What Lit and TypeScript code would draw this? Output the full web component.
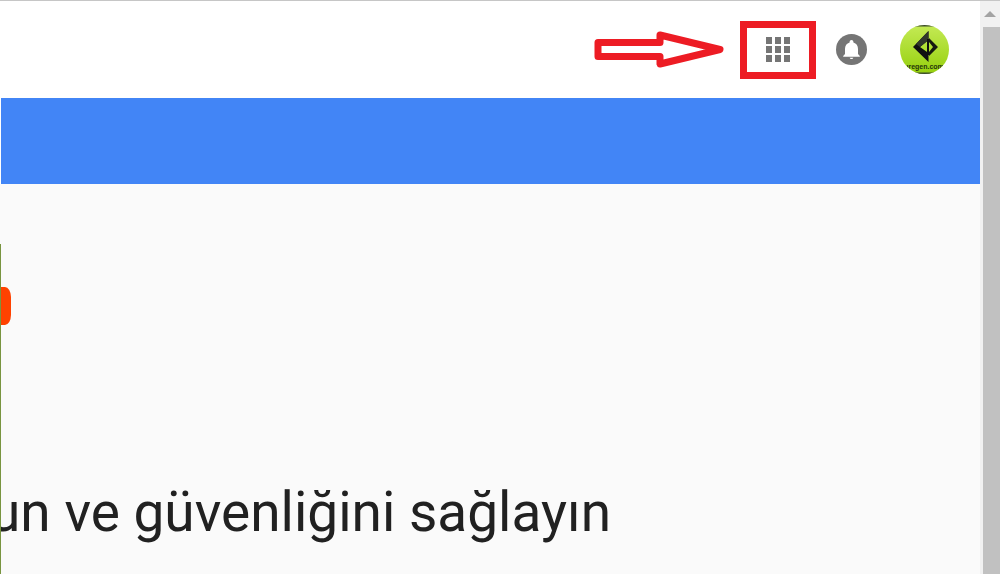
import { LitElement, html, svg, css } from "lit";
import { customElement } from "lit/decorators.js";

@customElement("app-root")
export class AppRoot extends LitElement {
  static styles = css`
    :host {
      display: grid;
      grid-template-columns: minmax(0, 1fr) 20px;
      height: 100vh;
      overflow: hidden;
      box-sizing: border-box;
      border-top: 1px solid #c6c6c6;
      background: #fff;
      font-family: Roboto, "Noto Sans", sans-serif;
      color: #212121;
    }
    .page {
      display: flex;
      flex-direction: column;
      min-width: 0;
      overflow: hidden;
    }
    header {
      display: flex;
      flex: none;
      align-items: center;
      justify-content: flex-end;
      height: 97px;
      padding-right: 30px;
      box-sizing: border-box;
    }
    svg {
      display: block;
    }
    button {
      display: block;
      padding: 0;
      border: 0;
      background: none;
      cursor: pointer;
    }
    .arrow {
      margin-right: 14px;
    }
    .apps {
      display: grid;
      place-items: center;
      width: 76px;
      height: 58px;
      margin-right: 20px;
      border: 7px solid #ed1c24;
    }
    .bell {
      margin-right: 32px;
    }
    .band {
      flex: none;
      height: 86px;
      margin-left: 1px;
      background: #4285f6;
    }
    main {
      position: relative;
      flex: 1;
      min-height: 0;
      overflow: hidden;
      background: #fafafa;
    }
    .edge {
      position: absolute;
      left: 0;
      top: 60px;
      bottom: 0;
      width: 1px;
      background: #789440;
    }
    .mark {
      position: absolute;
      left: 1px;
      top: 103px;
      width: 10px;
      height: 38px;
      border-radius: 0 6px 6px 0 / 0 10px 10px 0;
      background: #ff4200;
    }
    .copy {
      padding-top: 296px;
    }
    h1 {
      display: flex;
      justify-content: flex-end;
      width: 611px;
      margin: 0;
      font-size: 55px;
      line-height: 64px;
      font-weight: 400;
      white-space: nowrap;
    }
    .scroll {
      display: flex;
      flex-direction: column;
      background: #f1f1f1;
    }
    .up {
      display: grid;
      place-items: center;
      height: 26px;
    }
    .thumb {
      flex: 1;
      margin-left: 3px;
      background: #c1c1c1;
    }
  `;

  render() {
    return html`
      <div class="page">
        <header>
          <svg class="arrow" width="132" height="38" viewBox="0 0 132 38" aria-hidden="true">
            <path d="M4 11.500H66V4L126 18.500L66 33V25.500H4Z" fill="none" stroke="#ed1c24" stroke-width="7" stroke-linejoin="round" />
          </svg>
          <button class="apps" aria-label="Google uygulamaları">
            <svg width="24" height="26" viewBox="0 0 24 26" fill="#757575">
              ${[0, 9, 18].map((y) => [0, 9, 18].map((x) => svg`<rect x=${x} y=${y} width="6" height="7" />`))}
            </svg>
          </button>
          <button class="bell" aria-label="Bildirimler">
            <svg width="32" height="32" viewBox="0 0 32 32">
              <circle cx="15.500" cy="15.500" r="15.500" fill="#757575" />
              <path d="M15.500 6c-1.100 0-1.900.8-1.900 1.900v.7c-3 .8-4.600 3.400-4.600 6.300v5l-1.800 2v.9h16.600v-.9l-1.800-2v-5c0-2.900-1.600-5.500-4.600-6.300v-.7c0-1.100-.8-1.900-1.900-1.900zM13.700 23.700c.2.900.9 1.400 1.800 1.400s1.600-.5 1.800-1.400z" fill="#fff" />
            </svg>
          </button>
          <button class="avatar" aria-label="Hesap">
            <svg width="50" height="50" viewBox="0 0 50 50">
              <defs>
                <linearGradient id="lime" x1="0" y1="0" x2="0" y2="1">
                  <stop offset="0" stop-color="#c4ea55" />
                  <stop offset="1" stop-color="#94cf0b" />
                </linearGradient>
                <clipPath id="disc"><circle cx="24.500" cy="24.500" r="24.500" /></clipPath>
              </defs>
              <g clip-path="url(#disc)">
                <rect width="50" height="50" fill="url(#lime)" />
                <path d="M15 0H35V1.500H15ZM15 47.500H35V50H15Z" fill="#3c4a30" />
                <path d="M28.500 6V15L20 22L28.500 28V37L13 22Z" fill="#111" />
                <path d="M28.500 6V15L20 22L16 19Z" fill="#30362c" />
                <path d="M27 14H29V30H27Z" fill="#111" />
                <path d="M29 13L38 22L29 31V27L33 22L29 17Z" fill="#151a10" />
                <text x="24" y="44" text-anchor="middle" font-family="Liberation Sans, sans-serif" font-size="7" font-weight="700" fill="#26350c">uregen.com</text>
              </g>
            </svg>
          </button>
        </header>
        <div class="band"></div>
        <main>
          <div class="edge"></div>
          <div class="mark"></div>
          <div class="copy">
            <h1>un ve güvenliğini sağlayın</h1>
          </div>
        </main>
      </div>
      <div class="scroll">
        <div class="up">
          <svg width="12" height="6" viewBox="0 0 12 6"><path d="M6 0L12 6H0Z" fill="#a3a3a3" /></svg>
        </div>
        <div class="thumb"></div>
      </div>
    `;
  }
}
